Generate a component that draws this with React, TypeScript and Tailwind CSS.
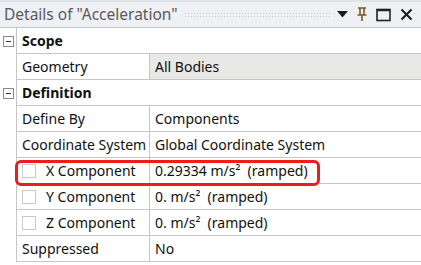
import React from "react";

const font = { fontFamily: '"Noto Sans", "Open Sans", Arial, sans-serif' };

function MinusBox() {
  return (
    <div className="w-[11px] h-[11px] border border-[#8a8a8a] bg-white flex items-center justify-center">
      <div className="w-[5px] h-px bg-[#333]" />
    </div>
  );
}

function Check() {
  return <div className="w-[14px] h-[14px] border border-[#c9c9c9] bg-white shrink-0" />;
}

type Row =
  | { kind: "header"; label: string }
  | { kind: "prop"; label: string; value: string; check?: boolean; gray?: boolean };

const rows: Row[] = [
  { kind: "header", label: "Scope" },
  { kind: "prop", label: "Geometry", value: "All Bodies", gray: true },
  { kind: "header", label: "Definition" },
  { kind: "prop", label: "Define By", value: "Components" },
  { kind: "prop", label: "Coordinate System", value: "Global Coordinate System" },
  { kind: "prop", label: "X Component", value: "0.29334 m/s²  (ramped)", check: true },
  { kind: "prop", label: "Y Component", value: "0. m/s²  (ramped)", check: true },
  { kind: "prop", label: "Z Component", value: "0. m/s²  (ramped)", check: true },
  { kind: "prop", label: "Suppressed", value: "No" },
];

export default function App() {
  return (
    <div className="w-[421px] h-[265px] bg-white overflow-hidden relative text-[14px] text-[#111]" style={font}>
      {/* title bar */}
      <div className="h-[28px] bg-[#eef0f4] border-t-2 border-[#dfe3ea] border-b border-b-[#c4c4c4] flex items-center pl-[4px] pr-[8px]">
        <span className="text-[#5a5a5a] text-[15.5px] whitespace-nowrap">Details of "Acceleration"</span>
        <div
          className="flex-1 h-[6px] mx-[6px]"
          style={{
            backgroundImage: "radial-gradient(circle, #c4c8cf 0.8px, transparent 0.9px)",
            backgroundSize: "3px 3px",
          }}
        />
        <div className="flex items-center gap-[9px]">
          <svg width="11" height="7" viewBox="0 0 11 7"><path d="M0 0h11L5.5 6.5z" fill="#1a1a1a" /></svg>
          <svg width="10" height="15" viewBox="0 0 10 15">
            <path d="M1 1h8M3 1v7M7 1v7M0.5 8h9M5 8v6" stroke="#7a5a2a" strokeWidth="1.6" fill="none" />
          </svg>
          <svg width="15" height="14" viewBox="0 0 15 14">
            <rect x="1" y="1.5" width="13" height="11" stroke="#222" strokeWidth="1.6" fill="none" />
            <path d="M1 2.5h13" stroke="#222" strokeWidth="1.5" />
          </svg>
          <svg width="13" height="13" viewBox="0 0 13 13">
            <path d="M1.5 1.5l10 10M11.5 1.5l-10 10" stroke="#1a1a1a" strokeWidth="2" />
          </svg>
        </div>
      </div>

      {/* table */}
      <div className="flex flex-col">
        {rows.map((r, i) =>
          r.kind === "header" ? (
            <div key={i} className="h-[26px] flex">
              <div className="w-[16px] flex items-center justify-center pl-[1px]">
                <MinusBox />
              </div>
              <div className="flex-1 border-l border-b border-[#c6c6c6] flex items-center pl-[5px] font-bold">
                {r.label}
              </div>
            </div>
          ) : (
            <div key={i} className="h-[26px] flex">
              <div className="w-[16px]" />
              <div className="w-[133px] border-l border-b border-[#c6c6c6] flex items-center pl-[5px] gap-[10px] whitespace-nowrap">
                {r.check && <Check />}
                <span>{r.label}</span>
              </div>
              <div
                className={`flex-1 border-l border-b border-[#c6c6c6] flex items-center pl-[5px] whitespace-pre ${
                  r.gray ? "bg-[#e8e8e6]" : "bg-white"
                }`}
              >
                {r.value}
              </div>
            </div>
          )
        )}
      </div>

      {/* highlight */}
      <div className="absolute left-[15px] top-[160px] w-[305px] h-[26px] border-[3px] border-[#ee1c1c] rounded-[6px] pointer-events-none" />
    </div>
  );
}
